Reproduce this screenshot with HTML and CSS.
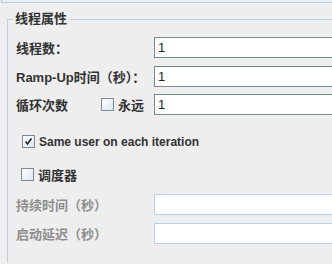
FILE: index.html
```html
<!DOCTYPE html>
<html>
	<head>
	<meta charset="utf-8">
	<link rel="stylesheet" href="styles.css">
	</head>

	<body>
		<div class="top-panel"></div>

		<fieldset class="group">
			<legend class="group-title">线程属性</legend>

			<div class="row row-first">
				<label class="label">线程数：</label>
				<div class="field">1</div>
			</div>

			<div class="row">
				<label class="label">Ramp-Up时间（秒）：</label>
				<div class="field">1</div>
			</div>

			<div class="row row-loop">
				<div class="label">
					<span class="loop-text">循环次数</span>
					<span class="check"></span>
					<span class="check-text">永远</span>
				</div>
				<div class="field">1</div>
			</div>

			<div class="row row-same">
				<span class="check checked">
					<svg width="9" height="9" viewBox="0 0 9 9"><path d="M1.5 4.5 L3.5 7 L7.5 1.5" fill="none" stroke="#222" stroke-width="1.6"/></svg>
				</span>
				<span class="check-text latin">Same user on each iteration</span>
			</div>

			<div class="row row-sched">
				<span class="check"></span>
				<span class="check-text">调度器</span>
			</div>

			<div class="row row-duration">
				<label class="label disabled">持续时间（秒）</label>
				<div class="field field-off"></div>
			</div>

			<div class="row">
				<label class="label disabled">启动延迟（秒）</label>
				<div class="field field-off"></div>
			</div>
		</fieldset>
	</body>
</html>
```

FILE: styles.css
```css
body, html {
	height: 100%;
	overflow: hidden;
}

body {
	margin: 0;
	padding: 0;
	background: #eeeeee;
	font-family: "Liberation Sans", "Noto Sans CJK SC", sans-serif;
	font-size: 13px;
	font-weight: bold;
	color: #333;
}

.top-panel {
	margin-left: 1px;
	height: 2px;
	border-left: 1px solid #b8cfe5;
	border-bottom: 1px solid #b8cfe5;
}

.group {
	margin: 8px 0 0 7px;
	padding: 0 0 19px 8px;
	border: 0;
	border-top: 1px solid #b8cfe5;
	border-left: 1px solid #b8cfe5;
	min-width: 0;
	overflow: hidden;
}

.group-title {
	margin-left: -3px;
	padding: 0 3px 0 2px;
	line-height: 16px;
	font-size: 13px;
}

.row {
	display: flex;
	align-items: center;
	height: 21px;
	margin-top: 8px;
}

.row-first {
	margin-top: 10px;
}

.row-loop {
	margin-top: 7px;
}

.row-same {
	margin-top: 16px;
	padding-left: 6px;
}

.row-sched {
	margin-top: 12px;
	padding-left: 5px;
}

.row-duration {
	margin-top: 9px;
}

.label {
	display: flex;
	align-items: center;
	width: 138px;
	flex: none;
	white-space: nowrap;
}

.label.disabled {
	color: #8e8e8e;
}

.loop-text {
	width: 85px;
}

.field {
	flex: none;
	width: 180px;
	height: 21px;
	box-sizing: border-box;
	border: 1px solid #7a8a99;
	background: #fff;
	padding-left: 3px;
	line-height: 19px;
	font-weight: normal;
	color: #222;
}

.field-off {
	border-color: #b8cfe5;
}

.check {
	display: inline-flex;
	align-items: center;
	justify-content: center;
	width: 13px;
	height: 13px;
	box-sizing: border-box;
	border: 1px solid #7a8a99;
	background: linear-gradient(135deg, #ffffff 0%, #dce6ef 100%);
	flex: none;
}

.check-text {
	margin-left: 4px;
}

.latin {
	font-size: 12px;
}
```
